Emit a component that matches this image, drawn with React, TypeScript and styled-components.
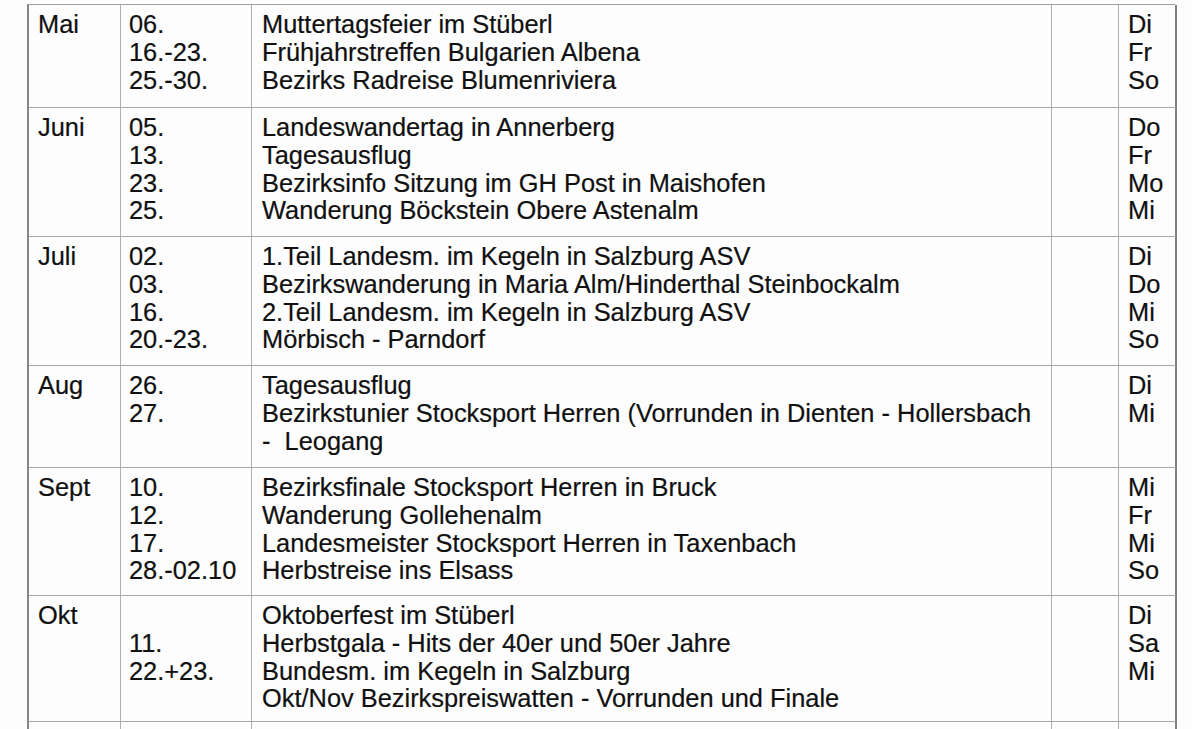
import React from "react";
import styled, { createGlobalStyle } from "styled-components";

const Global = createGlobalStyle`
  html, body { margin: 0; padding: 0; background: #ffffff; }
  body { font-family: "Liberation Sans", Arial, sans-serif; color: #111; }
`;

const Page = styled.div`
  width: 1192px;
  height: 729px;
  overflow: hidden;
  background: #fdfdfd;
  padding: 4px 0 0 27px;
  box-sizing: border-box;
`;

const Table = styled.div`
  display: grid;
  grid-template-columns: 92px 131px 800px 67px 58px;
  width: 1148px;
  border-top: 1px solid #a0a0a0;
  border-left: 2px solid #858585;
  box-sizing: border-box;
`;

const Cell = styled.div<{ $h: number; $pl: number; $last?: boolean }>`
  height: ${(p) => p.$h}px;
  box-sizing: border-box;
  padding: 6px 0 0 ${(p) => p.$pl}px;
  border-bottom: 1px solid #a6a6a6;
  border-right: ${(p) => (p.$last ? "2px solid #7f7f7f" : "1px solid #b0b0b0")};
  font-size: 25.4px;
  line-height: 27.8px;
  white-space: pre;
  color: #101010;
  -webkit-text-stroke: 0.2px #101010;
`;

const Line = styled.div``;

type Row = { month: string; dates: string[]; events: string[]; days: string[]; h: number };

const rows: Row[] = [
  {
    month: "Mai",
    h: 103,
    dates: ["06.", "16.-23.", "25.-30."],
    events: ["Muttertagsfeier im Stüberl", "Frühjahrstreffen Bulgarien Albena", "Bezirks Radreise Blumenriviera"],
    days: ["Di", "Fr", "So"],
  },
  {
    month: "Juni",
    h: 129,
    dates: ["05.", "13.", "23.", "25."],
    events: [
      "Landeswandertag in Annerberg",
      "Tagesausflug",
      "Bezirksinfo Sitzung im GH Post in Maishofen",
      "Wanderung Böckstein Obere Astenalm",
    ],
    days: ["Do", "Fr", "Mo", "Mi"],
  },
  {
    month: "Juli",
    h: 129,
    dates: ["02.", "03.", "16.", "20.-23."],
    events: [
      "1.Teil Landesm. im Kegeln in Salzburg ASV",
      "Bezirkswanderung in Maria Alm/Hinderthal Steinbockalm",
      "2.Teil Landesm. im Kegeln in Salzburg ASV",
      "Mörbisch - Parndorf",
    ],
    days: ["Di", "Do", "Mi", "So"],
  },
  {
    month: "Aug",
    h: 102,
    dates: ["26.", "27."],
    events: [
      "Tagesausflug",
      "Bezirkstunier Stocksport Herren (Vorrunden in Dienten - Hollersbach",
      "-  Leogang",
    ],
    days: ["Di", "Mi"],
  },
  {
    month: "Sept",
    h: 128,
    dates: ["10.", "12.", "17.", "28.-02.10"],
    events: [
      "Bezirksfinale Stocksport Herren in Bruck",
      "Wanderung Gollehenalm",
      "Landesmeister Stocksport Herren in Taxenbach",
      "Herbstreise ins Elsass",
    ],
    days: ["Mi", "Fr", "Mi", "So"],
  },
  {
    month: "Okt",
    h: 126,
    dates: ["", "11.", "22.+23."],
    events: [
      "Oktoberfest im Stüberl",
      "Herbstgala - Hits der 40er und 50er Jahre",
      "Bundesm. im Kegeln in Salzburg",
      "Okt/Nov Bezirkspreiswatten - Vorrunden und Finale",
    ],
    days: ["Di", "Sa", "Mi"],
  },
  { month: "", h: 40, dates: [], events: [], days: [] },
];

const Lines = ({ items }: { items: string[] }) => (
  <>
    {items.map((t, i) => (
      <Line key={i}>{t === "" ? "\u00a0" : t}</Line>
    ))}
  </>
);

export default function App() {
  return (
    <Page>
      <Global />
      <Table>
        {rows.map((r, i) => (
          <React.Fragment key={i}>
            <Cell $h={r.h} $pl={9}>
              <Lines items={r.month ? [r.month] : []} />
            </Cell>
            <Cell $h={r.h} $pl={8}>
              <Lines items={r.dates} />
            </Cell>
            <Cell $h={r.h} $pl={10}>
              <Lines items={r.events} />
            </Cell>
            <Cell $h={r.h} $pl={0} />
            <Cell $h={r.h} $pl={9} $last>
              <Lines items={r.days} />
            </Cell>
          </React.Fragment>
        ))}
      </Table>
    </Page>
  );
}
